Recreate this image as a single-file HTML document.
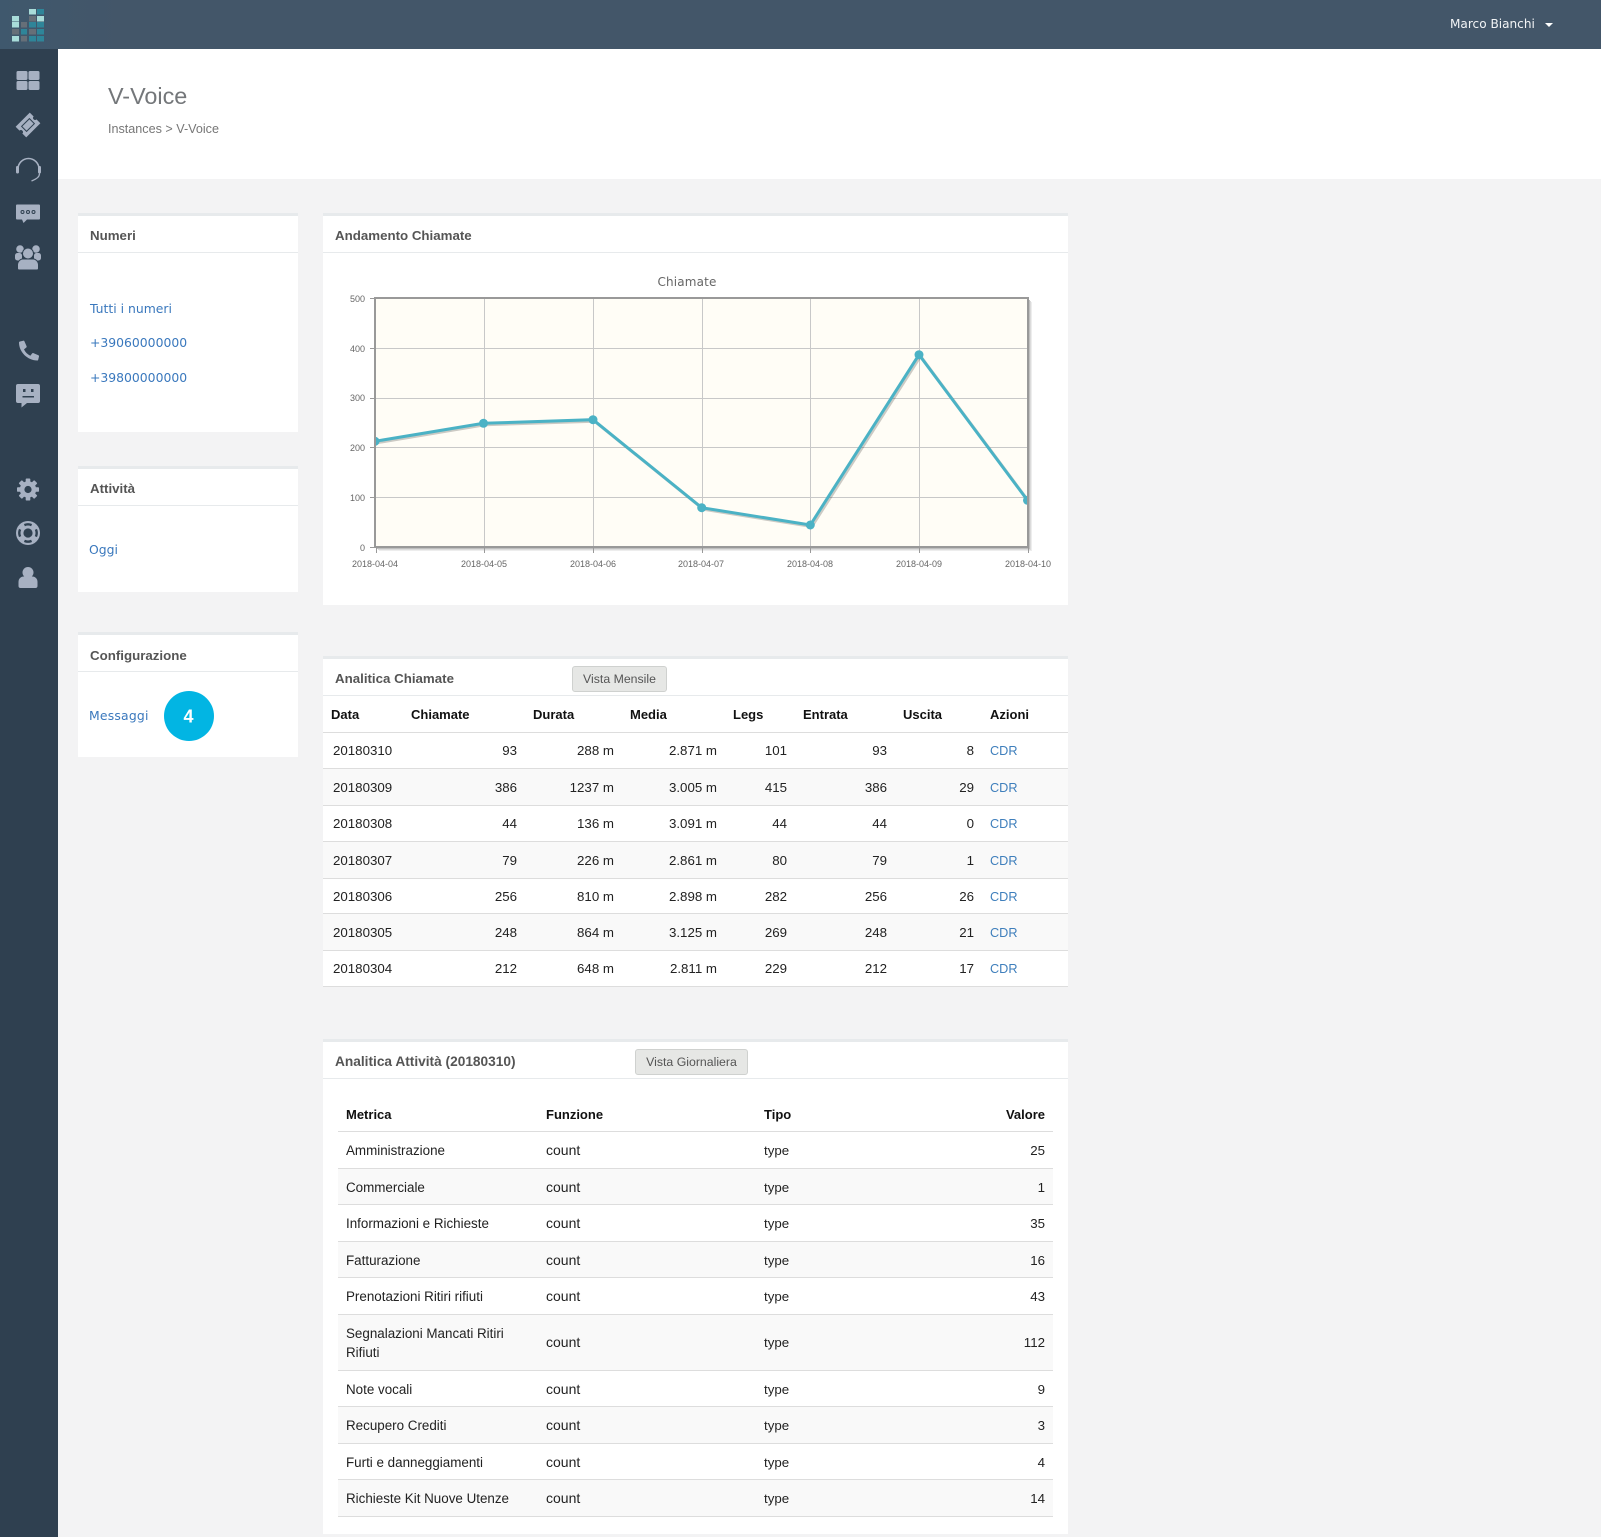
<!DOCTYPE html>
<html lang="it">
<head>
<meta charset="utf-8">
<title>V-Voice</title>
<style>
*{box-sizing:border-box}
html,body{margin:0;padding:0}
body{width:1601px;height:1537px;position:relative;overflow:hidden;background:#f3f3f4;font-family:"Liberation Sans",Arial,sans-serif;color:#222}
a{text-decoration:none;color:#3a78bd}
#top{position:absolute;left:0;top:0;width:1601px;height:49px;background:linear-gradient(90deg,#3f586d 0,#435669 120px,#435669 100%)}
#side{position:absolute;left:0;top:49px;width:58px;height:1488px;background:#2f4050}
#head{position:absolute;left:58px;top:49px;width:1543px;height:130px;background:#fff}
#head h1{position:absolute;left:50px;top:30px;margin:0;font-size:23.4px;line-height:34px;font-weight:400;color:#74777a}
#head div{position:absolute;left:50px;top:72px;font-size:12.6px;line-height:16px;color:#777}
#user{position:absolute;left:1450px;top:15px;font:12.1px/19px "DejaVu Sans",sans-serif;color:#f2f4f6}
#caret{position:absolute;left:1545px;top:23px;width:0;height:0;border-left:4px solid transparent;border-right:4px solid transparent;border-top:4px solid #fff}
.p{position:absolute;background:#fff;border-top:3px solid #e7eaec}
.t{height:37px;border-bottom:1px solid #e7eaec;padding-left:12px;font-size:13.3px;line-height:40px;font-weight:700;color:#555}
.l{position:absolute;font:12.4px/18px "DejaVu Sans",sans-serif;white-space:nowrap}
.badge{position:absolute;left:164px;top:691px;width:50px;height:50px}
.btn{position:absolute;background:#e6e7e5;border:1px solid #cfd1cf;border-radius:3px;font-size:12.3px;line-height:24px;text-align:center;color:#555}
table{border-collapse:separate;border-spacing:0;table-layout:fixed;position:absolute;font-size:13.3px;line-height:19px;color:#222}
th{font-weight:700;font-size:13px;text-align:left;padding:0 8px;border-bottom:1px solid #ddd;color:#111}
td{padding:0 8px;border-bottom:1px solid #ddd}
.s td{background:#f9f9f9}
.r{text-align:right}
.a td:first-child{padding-left:10px}
.a td:last-child{font-size:12.7px;padding-top:2px}
.a a{color:#3f7fbc}
.b td:first-child{font-size:13.4px}
.b td:nth-child(2){font-size:14px}
.n td,.n th{padding-top:2px}
</style>
</head>
<body>
<div id="top">
<svg width="58" height="49" style="position:absolute;left:0;top:0">
<g fill="#a8dcd9">
<rect x="12" y="16" width="7" height="5.500"/><rect x="12" y="22" width="7" height="5.500"/><rect x="12" y="36" width="7" height="5.500"/>
<rect x="29" y="9" width="7" height="5.500"/><rect x="37" y="16" width="7" height="5.500"/>
</g>
<g fill="#666f78">
<rect x="12" y="29" width="7" height="5.500"/><rect x="21" y="22" width="6" height="5.500"/><rect x="21" y="36" width="6" height="5.500"/>
<rect x="29" y="16" width="7" height="5.500"/><rect x="29" y="29" width="7" height="5.500"/>
</g>
<g fill="#2f8599">
<rect x="21" y="29" width="6" height="5.500"/><rect x="29" y="22" width="7" height="5.500"/><rect x="29" y="36" width="7" height="5.500"/>
<rect x="37" y="9" width="7" height="5.500"/><rect x="37" y="22" width="7" height="5.500"/><rect x="37" y="29" width="7" height="5.500"/><rect x="37" y="36" width="7" height="5.500"/>
</g>
</svg>
<span id="user">Marco Bianchi</span><span id="caret"></span>
</div>

<div id="side">
<svg width="58" height="560" viewBox="0 49 58 560" style="position:absolute;left:0;top:0" fill="#a7b1c2">
<!-- dashboard -->
<rect x="16.500" y="71" width="11" height="9" rx="1.500"/><rect x="28.500" y="71" width="11" height="9" rx="1.500"/>
<rect x="16.500" y="81" width="11" height="9" rx="1.500"/><rect x="28.500" y="81" width="11" height="9" rx="1.500"/>
<!-- ticket -->
<g transform="rotate(-45 28 125)">
<path d="M18 117.500h20v5.500a2 2 0 0 0 0 4v5.500H18v-5.500a2 2 0 0 0 0-4z"/>
<rect x="22.500" y="121.500" width="11" height="7" fill="none" stroke="#2f4050" stroke-width="1"/>
</g>
<!-- headset -->
<path d="M18 169a10.500 10.500 0 0 1 21 0" fill="none" stroke="#a7b1c2" stroke-width="1.600"/>
<rect x="16" y="166" width="3" height="7.500" rx="1.200"/><rect x="38" y="166" width="3" height="7.500" rx="1.200"/>
<path d="M39.500 173.500c0 3-2 5-8 7.500" fill="none" stroke="#a7b1c2" stroke-width="1.300"/>
<!-- chat dots -->
<path d="M17 204.500h22a1 1 0 0 1 1 1v13a1 1 0 0 1-1 1H27l-3.500 3.500-1.500-3.500h-5a1 1 0 0 1-1-1v-13a1 1 0 0 1 1-1z"/>
<g fill="none" stroke="#2f4050" stroke-width="1"><circle cx="22.500" cy="212" r="1.500"/><circle cx="28" cy="212" r="1.500"/><circle cx="33.500" cy="212" r="1.500"/></g>
<!-- users -->
<circle cx="20" cy="249" r="3.800"/><circle cx="36" cy="249" r="3.800"/>
<rect x="15" y="253" width="7" height="7.500" rx="2.500"/><rect x="34" y="253" width="7" height="7.500" rx="2.500"/>
<path d="M19 270c-.8 0-1.500-.7-1.500-1.500v-3.500c0-3.500 3-6 5-6h11c2 0 5 2.500 5 6v3.500c0 .8-.7 1.500-1.500 1.500z" stroke="#2f4050" stroke-width="1"/>
<circle cx="28" cy="253.500" r="5.500" stroke="#2f4050" stroke-width="1"/>
<!-- phone -->
<path d="M20 341.500l3.200-.8c.6-.1 1 .1 1.200.6l2.200 5c.2.500.1.900-.3 1.200l-2.300 1.900c1.300 2.800 3.500 5 6.300 6.300l1.900-2.300c.3-.4.700-.5 1.200-.3l5 2.200c.5.200.7.600.6 1.200l-.8 3.200c-.1.500-.5.800-1 .8C27.600 360.500 19 352 19 342.500c0-.500.4-.900 1-1z"/>
<!-- chat face -->
<path d="M18 384h20a2 2 0 0 1 2 2v15a2 2 0 0 1-2 2H27l-5.500 4.500v-4.500H18a2 2 0 0 1-2-2v-15a2 2 0 0 1 2-2z"/>
<g fill="#2f4050"><rect x="23" y="389" width="2.500" height="3"/><rect x="31" y="389" width="2.500" height="3"/><rect x="22.500" y="396" width="11.500" height="1.500"/></g>
<!-- cog -->
<g transform="translate(28 489.500)">
<g><rect x="-2.300" y="-11" width="4.600" height="22" rx=".8"/><rect x="-2.300" y="-11" width="4.600" height="22" rx=".8" transform="rotate(45)"/><rect x="-2.300" y="-11" width="4.600" height="22" rx=".8" transform="rotate(90)"/><rect x="-2.300" y="-11" width="4.600" height="22" rx=".8" transform="rotate(135)"/></g>
<circle r="8.200"/><circle r="3.600" fill="#2f4050"/>
</g>
<!-- lifebuoy -->
<g transform="translate(28 533)">
<circle r="12"/>
<circle r="4.600" fill="#2f4050"/>
<g fill="none" stroke="#2f4050" stroke-width="2.400"><path d="M-3.600-7.900a8.700 8.700 0 0 1 7.200 0"/><path d="M7.900-3.600a8.700 8.700 0 0 1 0 7.200"/><path d="M3.600 7.900a8.700 8.700 0 0 1-7.200 0"/><path d="M-7.900 3.600a8.700 8.700 0 0 1 0-7.200"/></g>
</g>
<!-- user -->
<circle cx="28" cy="572.500" r="5.500"/>
<path d="M20.500 588c-1.200 0-2-.8-2-2v-4c0-3.500 2.500-5.500 5-5.500h9c2.500 0 5 2 5 5.500v4c0 1.200-.8 2-2 2z"/>
</svg>
</div>

<div id="head"><h1>V-Voice</h1><div>Instances &gt; V-Voice</div></div>

<div class="p" style="left:78px;top:213px;width:220px;height:219px"><div class="t">Numeri</div></div>
<a class="l" style="left:90px;top:300px">Tutti i numeri</a>
<a class="l" style="left:90px;top:334px">+39060000000</a>
<a class="l" style="left:90px;top:369px">+39800000000</a>

<div class="p" style="left:78px;top:466px;width:220px;height:126px"><div class="t">Attività</div></div>
<a class="l" style="left:89px;top:541px">Oggi</a>

<div class="p" style="left:78px;top:632px;width:220px;height:125px"><div class="t" style="line-height:41px">Configurazione</div></div>
<a class="l" style="left:89px;top:707px;letter-spacing:.2px">Messaggi</a>
<svg class="badge" viewBox="0 0 50 50"><circle cx="25" cy="25" r="25" fill="#02b5e3"/><text x="24.500" y="31.500" text-anchor="middle" font-family="Liberation Sans" font-weight="700" font-size="18" fill="#fff">4</text></svg>

<div class="p" style="left:323px;top:213px;width:745px;height:392px"><div class="t">Andamento Chiamate</div></div>
<svg width="745" height="350" viewBox="323 253 745 350" style="position:absolute;left:323px;top:253px">
<defs><clipPath id="c"><rect x="375" y="298" width="653" height="249"/></clipPath></defs>
<text x="687" y="286" text-anchor="middle" font-family="DejaVu Sans" font-size="12" letter-spacing=".15" fill="#666">Chiamate</text>
<g fill="none">
<path d="M1029.500 300V548.500H377" stroke="rgba(0,0,0,.25)" stroke-width="1"/>
<path d="M1030.500 301V549.500H378" stroke="rgba(0,0,0,.14)" stroke-width="1"/>
<path d="M1031.500 302V550.500H379" stroke="rgba(0,0,0,.07)" stroke-width="1"/>
</g>
<rect x="375" y="298" width="653" height="249" fill="#fffdf6"/>
<g stroke="#c8c8c8" stroke-width="1" fill="none">
<path d="M484.500 298V547M593.500 298V547M702.500 298V547M810.500 298V547M919.500 298V547"/>
<path d="M375 348.500H1028M375 398.500H1028M375 447.500H1028M375 497.500H1028"/>
</g>
<g stroke="#999" stroke-width="1">
<path d="M370 298.500h5M370 348.500h5M370 398.500h5M370 447.500h5M370 497.500h5M370 547.500h5"/>
<path d="M376.500 548v5M484.500 548v5M593.500 548v5M702.500 548v5M810.500 548v5M919.500 548v5M1028.500 548v5"/>
</g>
<g clip-path="url(#c)">
<polyline points="375,441.300 483.500,423.300 593,419.700 701.700,507.700 810.300,525 919,354.700 1027.500,500.300" transform="translate(1.500 1.500)" fill="none" stroke="rgba(0,0,0,.2)" stroke-width="3"/>
<polyline points="375,441.300 483.500,423.300 593,419.700 701.700,507.700 810.300,525 919,354.700 1027.500,500.300" fill="none" stroke="#4bb2c5" stroke-width="3"/>
<g fill="#4bb2c5"><circle cx="375" cy="441.300" r="4.500"/><circle cx="483.500" cy="423.300" r="4.500"/><circle cx="593" cy="419.700" r="4.500"/><circle cx="701.700" cy="507.700" r="4.500"/><circle cx="810.300" cy="525" r="4.500"/><circle cx="919" cy="354.700" r="4.500"/><circle cx="1027.500" cy="500.300" r="4.500"/></g>
</g>
<rect x="375" y="298" width="653" height="249" fill="none" stroke="#999" stroke-width="2"/>
<g font-family="Liberation Sans" font-size="9" fill="#666" text-anchor="end">
<text x="365" y="302">500</text><text x="365" y="352">400</text><text x="365" y="401">300</text><text x="365" y="451">200</text><text x="365" y="501">100</text><text x="365" y="551">0</text>
</g>
<g font-family="Liberation Sans" font-size="9" fill="#666" text-anchor="middle">
<text x="375" y="567">2018-04-04</text><text x="484" y="567">2018-04-05</text><text x="593" y="567">2018-04-06</text><text x="701" y="567">2018-04-07</text><text x="810" y="567">2018-04-08</text><text x="919" y="567">2018-04-09</text><text x="1028" y="567">2018-04-10</text>
</g>
</svg>

<div class="p" style="left:323px;top:656px;width:745px;height:331px"><div class="t">Analitica Chiamate</div></div>
<div class="btn" style="left:572px;top:666px;width:95px;height:26px">Vista Mensile</div>
<table class="a" style="left:323px;top:696px;width:745px">
<colgroup><col style="width:80px"><col style="width:122px"><col style="width:97px"><col style="width:103px"><col style="width:70px"><col style="width:100px"><col style="width:87px"><col style="width:86px"></colgroup>
<tr style="height:37px"><th>Data</th><th>Chiamate</th><th>Durata</th><th>Media</th><th>Legs</th><th>Entrata</th><th>Uscita</th><th>Azioni</th></tr>
<tr style="height:36px"><td>20180310</td><td class="r">93</td><td class="r">288 m</td><td class="r">2.871 m</td><td class="r">101</td><td class="r">93</td><td class="r">8</td><td><a>CDR</a></td></tr>
<tr class="s" style="height:37px"><td>20180309</td><td class="r">386</td><td class="r">1237 m</td><td class="r">3.005 m</td><td class="r">415</td><td class="r">386</td><td class="r">29</td><td><a>CDR</a></td></tr>
<tr style="height:36px"><td>20180308</td><td class="r">44</td><td class="r">136 m</td><td class="r">3.091 m</td><td class="r">44</td><td class="r">44</td><td class="r">0</td><td><a>CDR</a></td></tr>
<tr class="s" style="height:37px"><td>20180307</td><td class="r">79</td><td class="r">226 m</td><td class="r">2.861 m</td><td class="r">80</td><td class="r">79</td><td class="r">1</td><td><a>CDR</a></td></tr>
<tr style="height:35px"><td>20180306</td><td class="r">256</td><td class="r">810 m</td><td class="r">2.898 m</td><td class="r">282</td><td class="r">256</td><td class="r">26</td><td><a>CDR</a></td></tr>
<tr class="s" style="height:37px"><td>20180305</td><td class="r">248</td><td class="r">864 m</td><td class="r">3.125 m</td><td class="r">269</td><td class="r">248</td><td class="r">21</td><td><a>CDR</a></td></tr>
<tr style="height:36px"><td>20180304</td><td class="r">212</td><td class="r">648 m</td><td class="r">2.811 m</td><td class="r">229</td><td class="r">212</td><td class="r">17</td><td><a>CDR</a></td></tr>
</table>

<div class="p" style="left:323px;top:1039px;width:745px;height:495px"><div class="t" style="font-size:13.7px">Analitica Attività (20180310)</div></div>
<div class="btn" style="left:635px;top:1049px;width:113px;height:26px">Vista Giornaliera</div>
<table class="b" style="left:338px;top:1096px;width:715px">
<colgroup><col style="width:200px"><col style="width:218px"><col style="width:150px"><col style="width:147px"></colgroup>
<tr class="n" style="height:36px"><th>Metrica</th><th>Funzione</th><th>Tipo</th><th class="r">Valore</th></tr>
<tr style="height:37px"><td>Amministrazione</td><td>count</td><td>type</td><td class="r">25</td></tr>
<tr class="s n" style="height:36px"><td>Commerciale</td><td>count</td><td>type</td><td class="r">1</td></tr>
<tr style="height:37px"><td>Informazioni e Richieste</td><td>count</td><td>type</td><td class="r">35</td></tr>
<tr class="s n" style="height:36px"><td>Fatturazione</td><td>count</td><td>type</td><td class="r">16</td></tr>
<tr style="height:37px"><td>Prenotazioni Ritiri rifiuti</td><td>count</td><td>type</td><td class="r">43</td></tr>
<tr class="s" style="height:56px"><td>Segnalazioni Mancati Ritiri<br>Rifiuti</td><td>count</td><td>type</td><td class="r">112</td></tr>
<tr class="n" style="height:36px"><td>Note vocali</td><td>count</td><td>type</td><td class="r">9</td></tr>
<tr class="s" style="height:37px"><td>Recupero Crediti</td><td>count</td><td>type</td><td class="r">3</td></tr>
<tr class="n" style="height:36px"><td>Furti e danneggiamenti</td><td>count</td><td>type</td><td class="r">4</td></tr>
<tr class="s" style="height:37px"><td>Richieste Kit Nuove Utenze</td><td>count</td><td>type</td><td class="r">14</td></tr>
</table>
</body>
</html>
